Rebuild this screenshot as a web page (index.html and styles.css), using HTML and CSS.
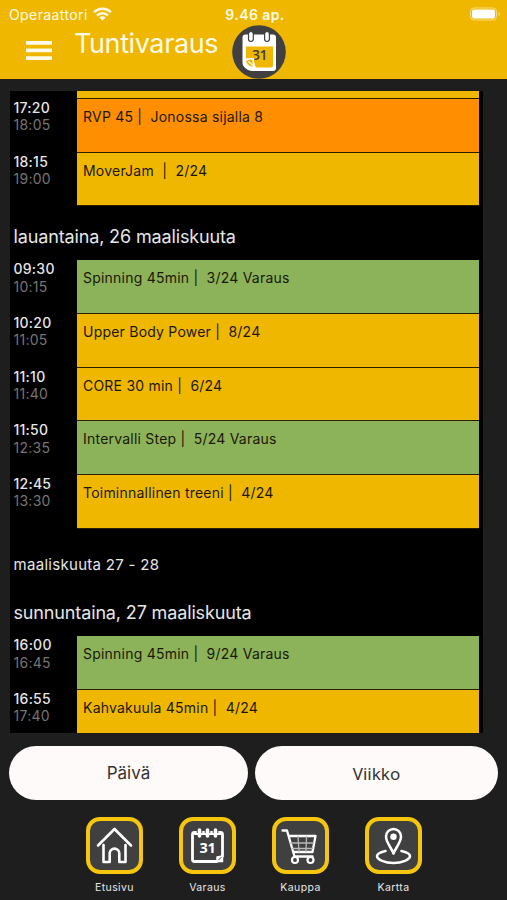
FILE: index.html
```html
<!DOCTYPE html>
<html lang="fi">
<head>
    <meta charset="UTF-8">
    <meta name="viewport" content="width=device-width, initial-scale=1.0">
    <title>Tuntivaraus</title>
    <link rel="stylesheet" href="styles.css">
</head>
<body>
    <header class="header">
        <div class="status">
            <div class="operator">
                <span>Operaattori</span>
                <svg width="19" height="14" viewBox="0 0 19 14" fill="none" stroke="#fffbe8" stroke-width="2.5">
                    <path d="M1 5.2C5.8.6 13.2.6 18 5.2M4 8.5c3.2-3 7.8-3 11 0"/>
                    <path d="M9.5 13.5L6.3 10.500c1.9-1.7 4.5-1.7 6.400 0z" fill="#fffbe8" stroke="none"/>
                </svg>
            </div>
            <div class="clock">9.46 ap.</div>
            <svg class="battery" width="32" height="14" viewBox="0 0 32 14">
                <rect x="1.5" y="1" width="26" height="12" rx="3.5" fill="none" stroke="#f8dc80" stroke-width="1"/>
                <rect x="3" y="2.5" width="23" height="9" rx="2" fill="#fff"/>
                <path d="M29.5 5c1.8.8 1.8 3.2 0 4z" fill="#f8dc80"/>
            </svg>
        </div>
        <div class="title-bar">
            <svg class="menu" width="26" height="19" viewBox="0 0 26 19" fill="#fffbe8">
                <path d="M0 0h26v3.7H0zM0 7.600h26v3.7H0zM0 15.200h26v3.7H0z"/>
            </svg>
            <h1>Tuntivaraus</h1>
            <svg class="logo" width="54" height="54" viewBox="0 0 54 54">
                <circle cx="27" cy="27" r="26.800" fill="#404040"/>
                <path d="M13.500 9.500h27.500a3 3 0 0 1 3 3V43a3 3 0 0 1-3 3H20c-4 0-9.500-4-9.500-8V12.500a3 3 0 0 1 3-3z" fill="#fff"/>
                <path d="M14 21.500h27V40a2.500 2.500 0 0 1-2.500 2.500H23.500L21 33l-7 .5z" fill="#efb700"/>
                <text x="27.500" y="35" class="logo-day">31</text>
                <path d="M13 36c2.500-2 5.500-2.500 8.500-2-.8 3 0 6 1.500 8.500-4.500.5-9-2-10-6.500z" fill="#efb700" stroke="#fff" stroke-width="1.6"/>
                <path d="M16 36.500c3 1 4 3.500 6 5.500" fill="none" stroke="#fff" stroke-width="1.2"/>
                <g fill="#fff" stroke="#404040" stroke-width="1.200">
                    <rect x="16.500" y="6.500" width="4.800" height="10" rx="2.400"/>
                    <rect x="32.600" y="6.500" width="4.800" height="10" rx="2.400"/>
                </g>
            </svg>
        </div>
    </header>

    <main class="schedule">
        <div class="row cut"><div class="times"></div><div class="class-box"></div></div>
        <div class="row">
            <div class="times"><b>17:20</b><span>18:05</span></div>
            <div class="class-box queue">RVP 45 |&nbsp; Jonossa sijalla 8</div>
        </div>
        <div class="row">
            <div class="times"><b>18:15</b><span>19:00</span></div>
            <div class="class-box">MoverJam &nbsp;|&nbsp; 2/24</div>
        </div>

        <h2>lauantaina, 26 maaliskuuta</h2>
        <div class="row">
            <div class="times"><b>09:30</b><span>10:15</span></div>
            <div class="class-box booked">Spinning 45min |&nbsp; 3/24 Varaus</div>
        </div>
        <div class="row">
            <div class="times"><b>10:20</b><span>11:05</span></div>
            <div class="class-box">Upper Body Power |&nbsp; 8/24</div>
        </div>
        <div class="row">
            <div class="times"><b>11:10</b><span>11:40</span></div>
            <div class="class-box">CORE 30 min |&nbsp; 6/24</div>
        </div>
        <div class="row">
            <div class="times"><b>11:50</b><span>12:35</span></div>
            <div class="class-box booked">Intervalli Step |&nbsp; 5/24 Varaus</div>
        </div>
        <div class="row">
            <div class="times"><b>12:45</b><span>13:30</span></div>
            <div class="class-box">Toiminnallinen treeni |&nbsp; 4/24</div>
        </div>

        <div class="week">maaliskuuta 27 - 28</div>
        <h2>sunnuntaina, 27 maaliskuuta</h2>
        <div class="row">
            <div class="times"><b>16:00</b><span>16:45</span></div>
            <div class="class-box booked">Spinning 45min |&nbsp; 9/24 Varaus</div>
        </div>
        <div class="row">
            <div class="times"><b>16:55</b><span>17:40</span></div>
            <div class="class-box">Kahvakuula 45min |&nbsp; 4/24</div>
        </div>
    </main>

    <div class="buttons">
        <button class="day">Päivä</button>
        <button class="week-btn">Viikko</button>
    </div>

    <nav class="tabs">
        <a class="tab">
            <svg class="icon" viewBox="0 0 57 57">
                <rect x="2" y="2" width="53" height="53" rx="12"/>
                <path d="M12 28.5L28.5 12 45 28.5M17.5 28v17h6.200V36.500c0-6.500 9.600-6.500 9.600 0V45h6.200V28" stroke-width="2.6"/>
            </svg>
            <span>Etusivu</span>
        </a>
        <a class="tab">
            <svg class="icon" viewBox="0 0 57 57">
                <rect x="2" y="2" width="53" height="53" rx="12"/>
                <path d="M15.500 15.500h26a2 2 0 0 1 2 2V39L38 44.500H15.500a2 2 0 0 1-2-2v-25a2 2 0 0 1 2-2z" stroke-width="2.8"/>
                <path d="M38 44.500V40l5.500-1v5.500z" fill="#fff" stroke-width="1.5"/>
                <path d="M39.500 43l2.500-2.500" stroke="#404040" stroke-width="1"/>
                <path d="M20.500 13v6.500M28.500 13v6.500M36.500 13v6.500" stroke="#404040" stroke-width="5.5"/>
                <path d="M16 17h26" stroke-width="2"/>
                <path d="M20.500 13v6M28.500 13v6M36.500 13v6" stroke-width="3.6"/>
                <text x="28.500" y="35.800" class="tab-day">31</text>
            </svg>
            <span>Varaus</span>
        </a>
        <a class="tab">
            <svg class="icon" viewBox="0 0 57 57">
                <rect x="2" y="2" width="53" height="53" rx="12"/>
                <path d="M10.500 13.500h4.500l7.500 26h18M17 19h26.500l-3 16H21" stroke-width="2.3"/>
                <path d="M18.500 26h23M20 31.500h20.500M26 19.500l1 15M34.500 19.500l-.5 15" stroke="#b8b8b8" stroke-width="1.3"/>
                <g stroke-width="2.2"><circle cx="23" cy="43" r="3"/><circle cx="38.500" cy="43" r="3"/></g>
            </svg>
            <span>Kauppa</span>
        </a>
        <a class="tab">
            <svg class="icon" viewBox="0 0 57 57">
                <rect x="2" y="2" width="53" height="53" rx="12"/>
                <path d="M28.500 36.500c-2-5.500-7.500-11-7.500-17a7.500 7.500 0 0 1 15 0c0 6-5.500 11.500-7.500 17z" stroke-width="2.5"/>
                <circle cx="28.500" cy="19.800" r="3.200" fill="#fff" stroke="none"/>
                <path d="M20.500 34c-5 1.200-8.500 2.800-8.500 5 0 3.700 8 7 16.500 7S45 42.700 45 39c0-2.200-3.500-3.800-8.500-5" stroke-width="2.6"/>
            </svg>
            <span>Kartta</span>
        </a>
    </nav>
</body>
</html>
```
FILE: styles.css
```css
* {
    box-sizing: border-box;
}
body {
    margin: 0;
    height: 900px;
    overflow: hidden;
    background-color: #1e1e1e;
    font-family: Inter, "Liberation Sans", sans-serif;
}
.header {
    height: 79px;
    background-color: #efb700;
    color: #fffbe8;
}
.status {
    display: grid;
    grid-template-columns: 1fr auto 1fr;
    align-items: center;
    height: 25px;
    padding: 3px 6px 0 9px;
    font-size: 14px;
    letter-spacing: 0.4px;
}
.operator {
    display: flex;
    align-items: center;
    gap: 5px;
}
.clock {
    font-weight: 600;
}
.battery {
    justify-self: end;
}
.title-bar {
    display: flex;
    align-items: flex-start;
    height: 54px;
    padding-left: 26px;
}
.menu {
    margin-top: 16px;
}
h1 {
    width: 157px;
    margin: 1px 0 0 22px;
    font-size: 27px;
    line-height: 36px;
    font-weight: 400;
    letter-spacing: -0.4px;
    white-space: nowrap;
}
.logo {
    margin-left: 1px;
}
.logo-day {
    font: 600 14px "Open Sans", sans-serif;
    letter-spacing: -0.5px;
    fill: #404040;
    text-anchor: middle;
}
.schedule {
    width: 473px;
    height: 642px;
    margin: 12px 0 0 9.5px;
    overflow: hidden;
    background-color: #000;
}
.row {
    display: flex;
    height: 53.7px;
}
.times {
    width: 67.5px;
    padding-left: 4px;
    font-size: 14px;
    line-height: 17.3px;
    letter-spacing: 0.25px;
    color: #747474;
}
.times b,
.times span {
    display: block;
    font-weight: 400;
}
.times b {
    color: #e6e6e6;
    font-weight: 500;
}
.class-box {
    width: 402px;
    padding: 9px 6px 0;
    background-color: #efb700;
    border-bottom: 1px solid #2a2000;
    color: #1c1805;
    font-size: 14px;
    line-height: 18px;
    letter-spacing: 0.22px;
}
.row.cut {
    height: 8px;
}
.cut .class-box {
    padding: 0;
}
.queue {
    background-color: #ff8f00;
}
.booked {
    background-color: #8cb35a;
}
h2 {
    height: 54px;
    margin: 0;
    padding: 19px 0 0 4px;
    font-size: 18px;
    line-height: 24px;
    font-weight: 400;
    letter-spacing: -0.14px;
    color: #e6e6e6;
}
.week {
    height: 53.5px;
    padding: 26px 0 0 4px;
    font-size: 15px;
    line-height: 20px;
    letter-spacing: 0.3px;
    color: #e6e6e6;
}
.buttons {
    display: flex;
    gap: 7px;
    margin: 13px 9px 0;
}
button {
    height: 54px;
    border: none;
    border-radius: 27px;
    background-color: #fffafa;
    color: #333;
    font-family: inherit;
    font-size: 17px;
}
.day {
    width: 239px;
}
.week-btn {
    width: 243px;
    font-family: "Noto Sans", sans-serif;
}
.tabs {
    display: flex;
    gap: 36px;
    margin: 17px 0 0 86px;
}
.tab {
    display: flex;
    flex-direction: column;
    align-items: center;
    width: 57px;
    gap: 6px;
    color: #e6e6e6;
    font-size: 10.5px;
    line-height: 15px;
    letter-spacing: 0.4px;
}
.icon {
    width: 57px;
    height: 57px;
    fill: none;
    stroke: #fff;
    stroke-linecap: round;
    stroke-linejoin: round;
}
.icon rect {
    fill: #404040;
    stroke: #f5c60c;
    stroke-width: 4px;
}
.tab-day {
    font: 700 14.5px "Open Sans", sans-serif;
    letter-spacing: -0.3px;
    fill: #fff;
    stroke: none;
    text-anchor: middle;
}
```
